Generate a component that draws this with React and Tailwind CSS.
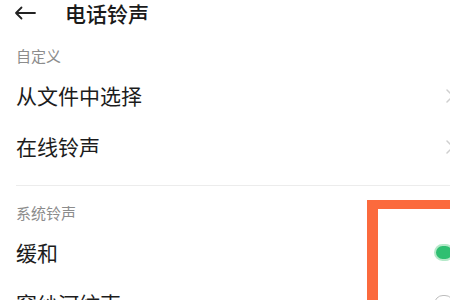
export default function App() {
  const cjk = { fontFamily: '"Noto Sans CJK SC", "Noto Sans", sans-serif' };

  const Chevron = () => (
    <svg width="8" height="14" viewBox="0 0 8 14" className="mr-[-4px] shrink-0" fill="none">
      <path d="M1 1l6 6-6 6" stroke="#cfcfcf" strokeWidth="1.5" strokeLinecap="round" strokeLinejoin="round" />
    </svg>
  );

  return (
    <div className="relative w-[450px] h-[300px] overflow-hidden bg-white" style={cjk}>
      {/* header */}
      <div className="h-[25px] pt-px flex items-center pl-[14px]">
        <svg width="22" height="14" viewBox="0 0 22 14" fill="none">
          <path d="M21 7H2M7.5 1.5L2 7l5.5 5.5" stroke="#222" strokeWidth="1.8" strokeLinecap="round" strokeLinejoin="round" />
        </svg>
        <span className="ml-[29px] text-[21px] leading-[24px] font-medium text-[#1a1a1a]">电话铃声</span>
      </div>

      {/* 自定义 */}
      <div className="mt-[17px] h-7 flex items-center pl-4 text-[15px] text-[#8c8c8c]">自定义</div>
      <div className="h-[51px] flex items-center justify-between pl-4 text-[21px] text-[#1c1c1c]">
        <span>从文件中选择</span>
        <Chevron />
      </div>
      <div className="h-[51px] flex items-center justify-between pl-4 text-[21px] text-[#1c1c1c]">
        <span>在线铃声</span>
        <Chevron />
      </div>

      <div className="mt-[13px] ml-4 h-px bg-[#ececec]" />

      {/* 系统铃声 */}
      <div className="mt-[13px] h-7 flex items-center pl-4 text-[15px] text-[#8c8c8c]">系统铃声</div>
      <div className="h-[51px] flex items-center justify-between pl-4 text-[21px] text-[#1c1c1c]">
        <span>缓和</span>
        <span className="mr-[-4px] w-[20px] h-[17px] rounded-full bg-[#2fbf71] border-[2.5px] border-[#b5e9c9]" />
      </div>
      <div className="h-[51px] flex items-center justify-between pl-4 text-[21px] text-[#1c1c1c]">
        <span>窗纱河纹声</span>
        <span className="mr-[-4px] w-[20px] h-[18px] rounded-full border-[1.5px] border-[#bdbdbd]" />
      </div>

      {/* highlight box */}
      <div className="absolute left-[367px] top-[200px] w-[120px] h-[140px] border-l-[11px] border-t-[9px] border-[#fb6a3d]" />
    </div>
  );
}
